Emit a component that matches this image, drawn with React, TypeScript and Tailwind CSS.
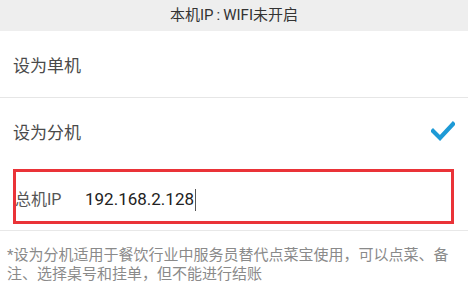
import React from "react";

export default function App() {
  const font = { fontFamily: 'Roboto, "Noto Sans CJK SC", sans-serif' };
  return (
    <div className="w-[468px] h-[303px] bg-white overflow-hidden" style={font}>
      <div className="h-[31px] bg-[#eeeeee] flex items-center justify-center text-[15px] text-[#333333]">
        本机IP<span className="px-[3px]">:</span>WIFI未开启
      </div>
      <div className="h-[67px] flex items-center pl-[13px] pt-[6px] text-[17px] text-[#4a4a4a] border-b border-[#e6e6e6]">
        设为单机
      </div>
      <div className="h-[68px] flex items-center justify-between pl-[13px] pr-[13px] pt-[4px] text-[17px] text-[#4a4a4a]">
        <span>设为分机</span>
        <svg width="24" height="20" viewBox="0 0 24 20" className="mt-[-6px]">
          <path d="M2 10 L9 17 L22 3" fill="none" stroke="#1e9ad6" strokeWidth="4.2" strokeLinecap="square" />
        </svg>
      </div>
      <div className="h-[65px] border-b border-[#e8e8e8] pt-[3px]">
        <div className="ml-[13px] w-[441px] h-[55px] border-[3px] border-[#ea3338] flex items-center">
          <span className="text-[16px] text-[#555555] w-[70px] ml-[-1px] pt-[6px]">总机IP</span>
          <span className="text-[17px] text-[#222222] pt-[6px] flex items-center">
            192.168.2.128
            <span className="inline-block w-[1px] h-[22px] bg-[#555555] ml-[1px]"></span>
          </span>
        </div>
      </div>
      <div className="pl-[7px] pt-[15px] text-[15px] leading-[19px] text-[#8a8a8a]">
        *设为分机适用于餐饮行业中服务员替代点菜宝使用，可以点菜、备<br />
        注、选择桌号和挂单，但不能进行结账
      </div>
    </div>
  );
}
